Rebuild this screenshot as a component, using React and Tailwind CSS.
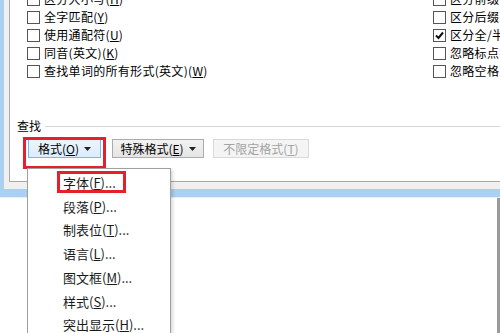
import React from 'react';

const font = { fontFamily: '"Noto Sans CJK SC", "Noto Sans", sans-serif' };

const Box = ({ checked }) => (
  <span className="w-[13px] h-[13px] shrink-0 border border-[#555] bg-white flex items-center justify-center">
    {checked && (
      <svg width="9" height="9" viewBox="0 0 9 9">
        <path d="M1 4.5 L3.5 7 L8 1.5" fill="none" stroke="#111" strokeWidth="2" />
      </svg>
    )}
  </span>
);

const Option = ({ label, hot, checked }) => (
  <div className="h-[18px] flex items-center gap-[4px] whitespace-nowrap">
    <Box checked={checked} />
    <span className="tracking-[0.3px]">
      {label}
      {hot && (
        <>
          (<span className="underline">{hot}</span>)
        </>
      )}
    </span>
  </div>
);

const Arrow = () => (
  <svg width="7" height="4" viewBox="0 0 7 4" className="ml-[5px]">
    <path d="M0 0 H7 L3.5 4 Z" fill="#222" />
  </svg>
);

const MenuItem = ({ label, hot }) => (
  <div className="h-[23.7px] flex items-center pl-[35px] text-[13px] text-[#1b1b1b] whitespace-nowrap">
    {label}(<span className="underline">{hot}</span>)...
  </div>
);

export default function App() {
  return (
    <div className="w-[500px] h-[333px] overflow-hidden relative bg-white text-[12px] text-black" style={font}>
      {/* dialog */}
      <div className="h-[197px] bg-[#a9cff3] pl-[4px] pb-[8px]">
        <div className="h-full bg-[#f0f0f0] pl-[5px] pb-[7px]">
          <div className="h-full bg-white border-l border-b border-[#a8a8a8] overflow-hidden">
            <div className="flex mt-[-10px] pl-[17px]">
              <div className="w-[406px] shrink-0 flex flex-col">
                <Option label="区分大小写" hot="H" />
                <Option label="全字匹配" hot="Y" />
                <Option label="使用通配符" hot="U" />
                <Option label="同音(英文)" hot="K" />
                <Option label="查找单词的所有形式(英文)" hot="W" />
              </div>
              <div className="shrink-0 flex flex-col">
                <Option label="区分前缀" />
                <Option label="区分后缀" />
                <Option label="区分全/半角" checked />
                <Option label="忽略标点符号" />
                <Option label="忽略空格" />
              </div>
            </div>

            <div className="mt-[40px] pl-[7px] h-[12px] flex items-center">
              <span>查找</span>
              <div className="flex-1 h-px bg-[#d5d5d5] ml-[4px]" />
            </div>

            <div className="mt-[7px] pl-[18px] flex items-center">
              <div className="w-[73px] h-[19px] flex items-center justify-center border border-[#7eb4ea] bg-gradient-to-b from-[#edf5fd] to-[#dcecfc]">
                <span>格式(<span className="underline">O</span>)</span>
                <Arrow />
              </div>
              <div className="ml-[11px] w-[92px] h-[19px] flex items-center justify-center border border-[#acacac] bg-gradient-to-b from-[#f2f2f2] to-[#e5e5e5]">
                <span>特殊格式(<span className="underline">E</span>)</span>
                <Arrow />
              </div>
              <div className="ml-[9px] w-[96px] h-[19px] flex items-center justify-center border border-[#d9d9d9] bg-[#f4f4f4] text-[#a3a3a3]">
                <span>不限定格式(<span className="underline">T</span>)</span>
              </div>
            </div>
          </div>
        </div>
      </div>

      {/* document area */}
      <div className="h-[136px] flex border-t border-[#e6eef6]">
        <div className="flex-1" />
        <div className="w-[3px] bg-[#9a9a9a]" />
      </div>

      {/* annotation around the format button */}
      <div className="absolute left-[23px] top-[137px] w-[83px] h-[32px] border-[3px] border-[#e5202a]" />

      {/* dropdown menu */}
      <div className="absolute left-[27px] top-[168px] w-[144px] bottom-0 bg-white border-x border-t border-[#a0a0a0] pt-[2px] shadow-[2px_2px_3px_rgba(0,0,0,0.15)]">
        <MenuItem label="字体" hot="F" />
        <MenuItem label="段落" hot="P" />
        <MenuItem label="制表位" hot="T" />
        <MenuItem label="语言" hot="L" />
        <MenuItem label="图文框" hot="M" />
        <MenuItem label="样式" hot="S" />
        <MenuItem label="突出显示" hot="H" />
      </div>

      {/* annotation around first menu item */}
      <div className="absolute left-[57px] top-[171px] w-[69px] h-[22px] border-[3px] border-[#e5202a]" />
    </div>
  );
}
